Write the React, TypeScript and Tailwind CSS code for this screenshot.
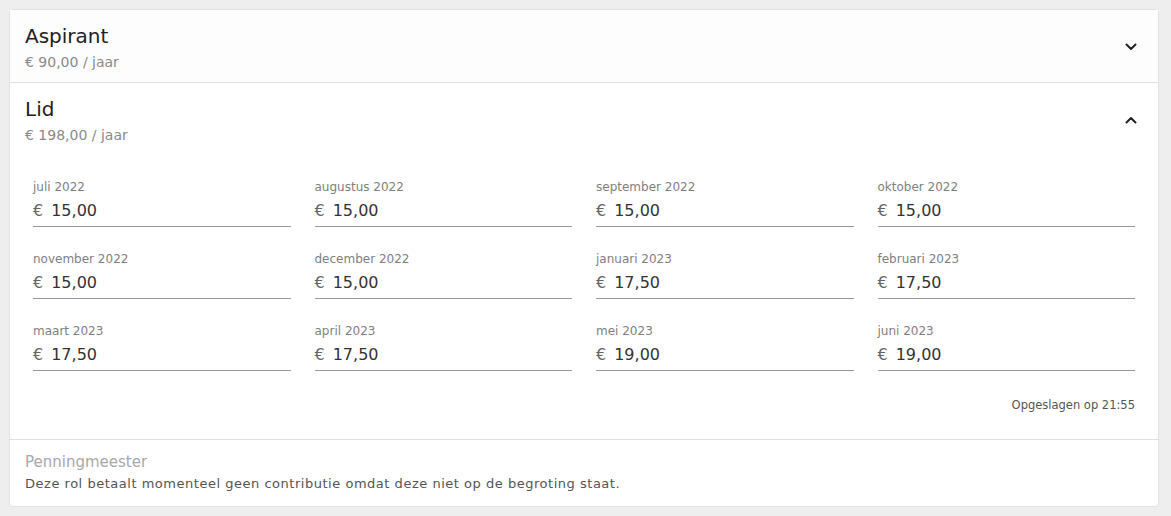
import React from "react";

const months: [string, string][] = [
  ["juli 2022", "15,00"],
  ["augustus 2022", "15,00"],
  ["september 2022", "15,00"],
  ["oktober 2022", "15,00"],
  ["november 2022", "15,00"],
  ["december 2022", "15,00"],
  ["januari 2023", "17,50"],
  ["februari 2023", "17,50"],
  ["maart 2023", "17,50"],
  ["april 2023", "17,50"],
  ["mei 2023", "19,00"],
  ["juni 2023", "19,00"],
];

function Chevron({ up }: { up?: boolean }) {
  return (
    <svg width="14" height="14" viewBox="0 0 14 14" fill="none" className="text-[#222]">
      {up ? (
        <polyline points="2.5,9.5 7,5 11.5,9.5" stroke="currentColor" strokeWidth="2" strokeLinecap="round" strokeLinejoin="round" />
      ) : (
        <polyline points="2.5,4.5 7,9 11.5,4.5" stroke="currentColor" strokeWidth="2" strokeLinecap="round" strokeLinejoin="round" />
      )}
    </svg>
  );
}

export default function App() {
  return (
    <div
      className="min-h-[516px] bg-[#eeeeee] pt-[9px] pl-[9px] pr-[12px] pb-[11px]"
      style={{ fontFamily: '"DejaVu Sans", sans-serif' }}
    >
      <div className="bg-white rounded-[4px] border border-[#e2e2e2]">
        <div className="flex items-center justify-between pl-[15px] pr-[20px] pt-[12px] pb-[10px] border-b border-[#e0e0e0] bg-[#fdfdfd]">
          <div>
            <div className="text-[20px] leading-[28px] text-[#222]">Aspirant</div>
            <div className="text-[14px] leading-[20px] mt-[2px] text-[#8a8a8a]">€ 90,00 / jaar</div>
          </div>
          <Chevron />
        </div>
        <div className="border-b border-[#e0e0e0]">
          <div className="flex items-center justify-between pl-[15px] pr-[20px] pt-[12px]">
            <div>
              <div className="text-[20px] leading-[28px] text-[#222]">Lid</div>
              <div className="text-[14px] leading-[20px] mt-[2px] text-[#8a8a8a]">€ 198,00 / jaar</div>
            </div>
            <Chevron up />
          </div>
          <div className="px-[23px] pt-[34px]">
            <div className="grid grid-cols-4 gap-x-[24px] gap-y-[24px]">
              {months.map(([m, v]) => (
                <div key={m}>
                  <div className="text-[12px] leading-[16px] text-[#808080]">{m}</div>
                  <div className="flex items-center h-[28px] mt-[4px] border-b border-[#999] pb-[4px] text-[16px] text-[#333]">
                    <span className="text-[#666] mr-[8px]">€</span>
                    <span>{v}</span>
                  </div>
                </div>
              ))}
            </div>
            <div className="flex justify-end pt-[26px] pb-[26px]">
              <span className="text-[11.5px] leading-[16px] text-[#555]">Opgeslagen op 21:55</span>
            </div>
          </div>
        </div>
        <div className="pl-[15px] pt-[12px] pb-[12px]">
          <div className="text-[15px] leading-[20px] text-[#a8a8a8]">Penningmeester</div>
          <div className="text-[13px] leading-[20px] mt-[2px] text-[#555] tracking-[0.04em]">
            Deze rol betaalt momenteel geen contributie omdat deze niet op de begroting staat.
          </div>
        </div>
      </div>
    </div>
  );
}
